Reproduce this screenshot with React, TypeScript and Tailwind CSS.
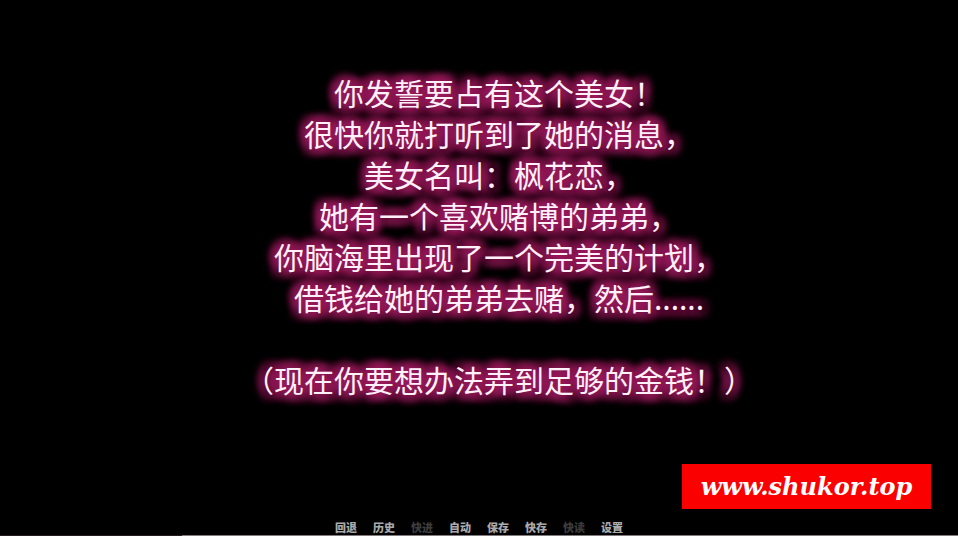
const storyLines = [
  "你发誓要占有这个美女！",
  "很快你就打听到了她的消息，",
  "美女名叫：枫花恋，",
  "她有一个喜欢赌博的弟弟，",
  "你脑海里出现了一个完美的计划，",
  "借钱给她的弟弟去赌，然后......",
  "",
  "（现在你要想办法弄到足够的金钱！）",
];

const menuItems = [
  { label: "回退", enabled: true },
  { label: "历史", enabled: true },
  { label: "快进", enabled: false },
  { label: "自动", enabled: true },
  { label: "保存", enabled: true },
  { label: "快存", enabled: true },
  { label: "快读", enabled: false },
  { label: "设置", enabled: true },
];

export default function App() {
  return (
    <div className="flex h-screen flex-col overflow-hidden bg-black font-['Noto_Sans_CJK_SC',sans-serif]">
      <main lang="zh-CN" className="flex-1 pt-[72px] pl-10 text-center">
        {storyLines.map((line, index) => (
          <p
            key={index}
            className="h-[41px] text-[30px] leading-[41px] whitespace-nowrap text-[#fff0fa] [text-shadow:5px_5px_7px_#981b5b,-5px_5px_7px_#981b5b,5px_-5px_7px_#981b5b,-5px_-5px_7px_#981b5b,0_6px_7px_#981b5b,0_-6px_7px_#981b5b,6px_0_7px_#981b5b,-6px_0_7px_#981b5b]"
          >
            {line}
          </p>
        ))}
      </main>

      <div className="flex justify-end pr-[27px]">
        <a
          href="#home"
          className="flex h-[45px] w-[249px] items-center justify-center bg-[#fb0000] font-['DejaVu_Serif',serif] text-[24px] leading-[45px] font-bold text-white italic"
        >
          www.shukor.top
        </a>
      </div>

      <nav className="mt-[11px] flex h-[15px] justify-center gap-4">
        {menuItems.map((item) => (
          <button
            key={item.label}
            type="button"
            disabled={!item.enabled}
            className="text-[11px] leading-[15px] font-black whitespace-nowrap text-[#aaaaaa] disabled:text-[#3c3c3c]"
          >
            {item.label}
          </button>
        ))}
      </nav>
      <div className="flex h-px">
        <div className="w-[19%] bg-[#251b20]" />
        <div className="flex-1 bg-[#817b7d]" />
      </div>
    </div>
  );
}
